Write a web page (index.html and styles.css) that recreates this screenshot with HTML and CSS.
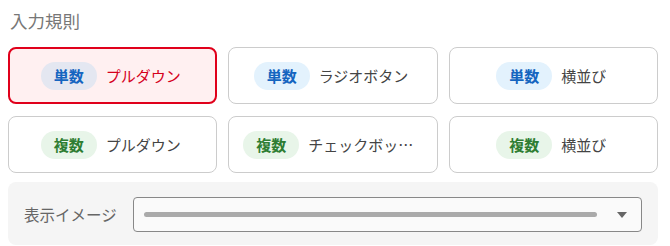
FILE: index.html
```html
<!DOCTYPE html>
<html lang="ja">
<head>
    <meta charset="UTF-8">
    <meta name="viewport" content="width=device-width, initial-scale=1.0">
    <title>入力規則</title>
    <link rel="stylesheet" href="styles.css">
</head>
<body>
    <div class="rule-section">
        <div class="section-title">入力規則</div>

        <!-- input type choices -->
        <div class="rule-grid">
            <div class="rule-card selected">
                <span class="badge single">単数</span>
                <span class="rule-label">プルダウン</span>
            </div>
            <div class="rule-card">
                <span class="badge single">単数</span>
                <span class="rule-label">ラジオボタン</span>
            </div>
            <div class="rule-card">
                <span class="badge single">単数</span>
                <span class="rule-label">横並び</span>
            </div>
            <div class="rule-card">
                <span class="badge multi">複数</span>
                <span class="rule-label">プルダウン</span>
            </div>
            <div class="rule-card">
                <span class="badge multi">複数</span>
                <span class="rule-label" title="チェックボックス">チェックボックス</span>
            </div>
            <div class="rule-card">
                <span class="badge multi">複数</span>
                <span class="rule-label">横並び</span>
            </div>
        </div>

        <!-- preview -->
        <div class="preview-panel">
            <span class="preview-label">表示イメージ</span>
            <div class="preview-select">
                <div class="placeholder-bar"></div>
                <svg class="select-arrow" width="10" height="6" viewBox="0 0 10 6">
                    <path d="M0 0 L10 0 L5 6 Z" fill="#666"/>
                </svg>
            </div>
        </div>
    </div>
</body>
</html>
```

FILE: styles.css
```css
* {
    box-sizing: border-box;
}

body {
    margin: 0;
    background: #fff;
    font-family: "Noto Sans CJK JP", "Noto Sans", sans-serif;
}

.rule-section {
    padding: 9px 12px 0 8px;
}

.section-title {
    font-size: 17.5px;
    line-height: 24px;
    color: #777;
    margin-bottom: 14px;
    padding-left: 2px;
}

.rule-grid {
    display: grid;
    grid-template-columns: repeat(3, 1fr);
    grid-auto-rows: 57px;
    gap: 12px 11px;
}

.rule-card {
    display: flex;
    align-items: center;
    justify-content: center;
    gap: 9px;
    padding: 0 18px 0 14px;
    border: 1px solid #ccc;
    border-radius: 8px;
    background: #fff;
    min-width: 0;
    cursor: pointer;
}

.rule-card.selected {
    border: 2px solid #e0001b;
    background: #fff0f1;
}

.badge {
    flex-shrink: 0;
    height: 28px;
    line-height: 28px;
    padding: 0 13px;
    border-radius: 14px;
    font-size: 15px;
    font-weight: bold;
}

.badge.single {
    background: #e3f2fd;
    color: #1565c0;
}

.rule-card.selected .badge.single {
    background: #e4e7f1;
}

.badge.multi {
    background: #e8f5e9;
    color: #2e7d32;
}

.rule-label {
    min-width: 0;
    font-size: 15px;
    color: #444;
    white-space: nowrap;
    overflow: hidden;
    text-overflow: ellipsis;
}

.rule-card.selected .rule-label {
    color: #d5001c;
}

.preview-panel {
    display: flex;
    align-items: center;
    gap: 16px;
    margin-top: 9px;
    height: 63px;
    padding: 0 16px;
    background: #f5f5f5;
    border-radius: 8px;
}

.preview-label {
    font-size: 15.5px;
    color: #666;
    white-space: nowrap;
}

.preview-select {
    flex: 1;
    display: flex;
    align-items: center;
    height: 35px;
    padding: 0 14px 0 10px;
    border: 1px solid #888;
    border-radius: 4px;
    background: #fafafa;
    margin-top: 2px;
}

.placeholder-bar {
    flex: 1;
    height: 5px;
    border-radius: 3px;
    background: #aaa;
    margin-right: 20px;
}
```
